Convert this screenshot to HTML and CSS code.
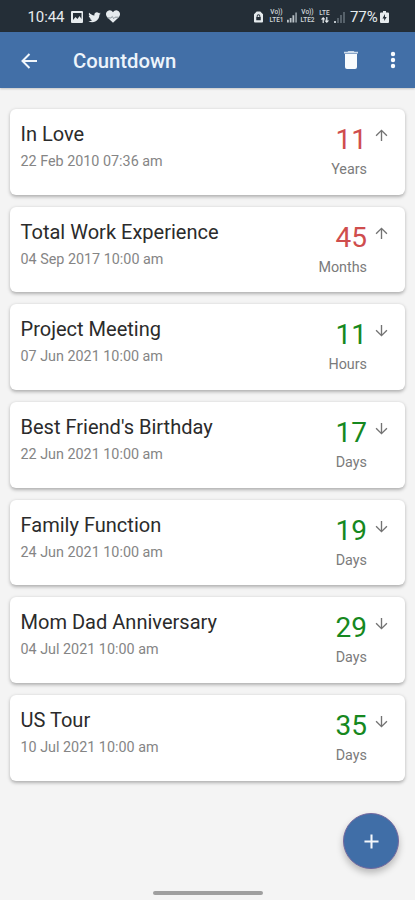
FILE: index.html
```html
<!DOCTYPE html>
<html lang="en">
<head>
<meta charset="utf-8">
<title>Countdown</title>
<link rel="stylesheet" href="styles.css">
</head>
<body>
<svg width="0" height="0" class="defs">
  <symbol id="up" viewBox="0 0 24 24"><path d="M12 22V3M2 12.500l10-10 10 10"/></symbol>
  <symbol id="down" viewBox="0 0 24 24"><path d="M12 2v19M2 11.500l10 10 10-10"/></symbol>
</svg>
<header class="status">
  <span class="time">10:44</span>
  <svg class="pic" viewBox="0 0 12 12"><path fill-rule="evenodd" d="M1 0h10a1 1 0 0 1 1 1v10a1 1 0 0 1-1 1H1a1 1 0 0 1-1-1V1a1 1 0 0 1 1-1zm1 2v7l2.500-3 2 2L8.500 5 10.500 8V2z"/></svg>
  <svg class="bird" viewBox="1 3 22 18"><path d="M22.460 6c-.77.350-1.600.580-2.460.690.880-.530 1.560-1.370 1.880-2.380-.830.500-1.750.850-2.720 1.050C18.370 4.500 17.260 4 16 4c-2.350 0-4.270 1.920-4.270 4.290 0 .340.040.670.110.980C8.280 9.090 5.110 7.380 3 4.790c-.370.630-.580 1.370-.580 2.150 0 1.490.750 2.810 1.910 3.560-.710 0-1.370-.200-1.950-.500v.030c0 2.080 1.480 3.820 3.440 4.210a4.220 4.220 0 0 1-1.930.070 4.280 4.280 0 0 0 4 2.980 8.521 8.521 0 0 1-5.330 1.840c-.340 0-.680-.020-1.020-.060C3.440 20.290 5.700 21 8.120 21 16 21 20.330 14.460 20.330 8.790c0-.190 0-.370-.010-.560.840-.600 1.560-1.360 2.140-2.230z"/></svg>
  <svg class="heart" viewBox="2 3 20 18"><path d="M12 21L4 13.500C1 10 1.500 6 4.500 4 7.500 2.300 10.500 3.500 12 6c1.500-2.500 4.500-3.700 7.500-2 3 2 3.500 6 .5 9.500z"/><path class="pulse" d="M4 14h5l2-2 2 3 2-2h5"/></svg>
  <span class="spacer"></span>
  <svg class="lock" viewBox="0 0 10 12"><path fill-rule="evenodd" d="M3 0h4l3 3v8a1 1 0 0 1-1 1H1a1 1 0 0 1-1-1V3zM2.500 6v3.500h5V6H7V5a2 2 0 0 0-4 0v1zM4 6V5a1 1 0 0 1 2 0v1z"/></svg>
  <span class="net volte"><span>Vo))</span><span>LTE1</span></span>
  <svg class="signal s1" viewBox="0 0 11 12"><path d="M0 9h2v3H0zM3 7h2v5H3zM6 4h2v8H6z"/><path class="mid" d="M9 1h2v11H9z"/></svg>
  <span class="net volte"><span>Vo))</span><span>LTE2</span></span>
  <span class="net lte"><span>LTE</span><svg class="updown" viewBox="0 0 8 5"><path d="M2 5V2H.5L2.500 0l2 2H3v3zM5 0v3H3.500l2 2 2-2H6V0z"/></svg></span>
  <svg class="signal s2" viewBox="0 0 11 12"><path d="M0 10h2v2H0z"/><path class="dim" d="M3 7h2v5H3zM6 4h2v8H6zM9 1h2v11H9z"/></svg>
  <span class="percent">77%</span>
  <svg class="battery" viewBox="0 0 9 12"><path fill-rule="evenodd" d="M3 0h3v1.500h2a1 1 0 0 1 1 1V11a1 1 0 0 1-1 1H1a1 1 0 0 1-1-1V2.500a1 1 0 0 1 1-1h2zM5 3L2.500 7.500h1.700V10L6.700 6H5z"/></svg>
</header>
<nav class="appbar">
  <svg class="back" viewBox="0 0 16 16"><path d="M16 8H1.500M8.500 1l-7 7 7 7"/></svg>
  <h1>Countdown</h1>
  <svg class="trash" viewBox="0 0 14 18"><path class="lid" d="M0 .8h3.500L4.300 0h5.400l.8.800H14v1.700H0z"/><path d="M1 3h12v13a2 2 0 0 1-2 2H3a2 2 0 0 1-2-2z"/></svg>
  <svg class="more" viewBox="0 0 6 18"><circle cx="3" cy="3" r="2.200"/><circle cx="3" cy="9" r="2.200"/><circle cx="3" cy="15" r="2.200"/></svg>
</nav>
<main class="list">
  <article class="card past"><div class="info"><h2>In Love</h2><p>22 Feb 2010 07:36 am</p></div><div class="count"><b>11</b><span>Years</span></div><svg class="arrow"><use href="#up"/></svg></article>
  <article class="card past"><div class="info"><h2>Total Work Experience</h2><p>04 Sep 2017 10:00 am</p></div><div class="count"><b>45</b><span>Months</span></div><svg class="arrow"><use href="#up"/></svg></article>
  <article class="card"><div class="info"><h2>Project Meeting</h2><p>07 Jun 2021 10:00 am</p></div><div class="count"><b>11</b><span>Hours</span></div><svg class="arrow"><use href="#down"/></svg></article>
  <article class="card"><div class="info"><h2>Best Friend's Birthday</h2><p>22 Jun 2021 10:00 am</p></div><div class="count"><b>17</b><span>Days</span></div><svg class="arrow"><use href="#down"/></svg></article>
  <article class="card"><div class="info"><h2>Family Function</h2><p>24 Jun 2021 10:00 am</p></div><div class="count"><b>19</b><span>Days</span></div><svg class="arrow"><use href="#down"/></svg></article>
  <article class="card"><div class="info"><h2>Mom Dad Anniversary</h2><p>04 Jul 2021 10:00 am</p></div><div class="count"><b>29</b><span>Days</span></div><svg class="arrow"><use href="#down"/></svg></article>
  <article class="card"><div class="info"><h2>US Tour</h2><p>10 Jul 2021 10:00 am</p></div><div class="count"><b>35</b><span>Days</span></div><svg class="arrow"><use href="#down"/></svg></article>
</main>
<button class="fab" aria-label="Add"><svg viewBox="0 0 16 16"><path d="M8 .5v15M.5 8h15"/></svg></button>
<div class="handle"></div>
</body>
</html>
```
FILE: styles.css
```css
* { box-sizing: border-box; margin: 0; padding: 0; }
body {
  width: 415px;
  height: 900px;
  overflow: hidden;
  position: relative;
  background: #f4f4f4;
  font-family: Roboto, sans-serif;
}
.defs { position: absolute; }
svg { display: block; flex: none; }

.status {
  height: 32px;
  padding: 1px 26px 0 27.5px;
  display: flex;
  align-items: center;
  background: #242e37;
  color: #e6ebee;
  fill: #e6ebee;
}
.time { width: 43.5px; font-size: 15px; letter-spacing: -0.1px; }
.pic { width: 12px; height: 12px; margin-right: 5px; }
.bird { width: 13px; height: 12px; margin-right: 5px; }
.heart { width: 14px; height: 13px; }
.pulse { fill: none; stroke: #7a848b; stroke-width: 1.2; }
.spacer { flex: 1; }
.lock { width: 9px; height: 12px; margin-right: 6px; }
.net {
  display: flex;
  flex-direction: column;
  align-items: center;
  gap: 0.5px;
  font-size: 6.5px;
  line-height: 7px;
  font-weight: 500;
  white-space: nowrap;
  color: #d2d8dc;
}
.net span { display: block; height: 7px; }
.volte { width: 15px; margin-right: 3px; }
.lte { width: 13px; margin-right: 3px; }
.updown { width: 10px; height: 6px; }
.signal { width: 10px; height: 12px; margin-right: 3px; fill: #bcc4c9; }
.s2 { width: 11px; margin-right: 5px; }
.dim { fill: #56616a; }
.mid { fill: #89939a; }
.percent { width: 30px; font-size: 15px; letter-spacing: -0.1px; }
.battery { width: 9px; height: 12px; }

.appbar {
  height: 56px;
  padding: 2px 19px 0 21px;
  display: flex;
  align-items: center;
  background: #426fa7;
  box-shadow: 0 1px 2px rgba(0, 0, 0, 0.2);
  fill: #f8fbfe;
}
.back { width: 16px; height: 16px; fill: none; stroke: #f1f6fb; stroke-width: 2; }
h1 { flex: 1; margin-left: 36px; font-size: 20.3px; line-height: 24px; font-weight: 500; color: #edf4fb; }
.trash { width: 14px; height: 18px; margin: -3px 32.5px 0 0; }
.lid { fill: #cddcec; }
.more { width: 6px; height: 18px; margin-top: -2px; }

.list { padding: 21px 10px 0; display: flex; flex-direction: column; gap: 12.2px; }
.card {
  height: 85.5px;
  padding: 12px 17px 0 10.5px;
  display: flex;
  border-radius: 6px;
  background: #fff;
  box-shadow: 0 1.5px 3.5px rgba(0, 0, 0, 0.28);
}
.info { flex: 1; }
h2 { font-size: 20.05px; line-height: 26px; font-weight: 400; color: #2b2b2b; }
.info p { margin-top: 6px; font-size: 14.35px; line-height: 18px; color: #858585; }
.count { display: flex; flex-direction: column; align-items: flex-end; }
.count b { margin-top: 2px; font-size: 28px; line-height: 34px; font-weight: 400; color: #168820; }
.past .count b { color: #cf4d4d; }
.count span { margin-top: 4px; font-size: 14.35px; line-height: 18px; color: #7b7b7b; }
.arrow { width: 13px; height: 13px; margin: 8px 0 0 8px; fill: none; stroke: #737373; stroke-width: 2.5; }

.fab {
  position: absolute;
  left: 343px;
  top: 813px;
  width: 56px;
  height: 56px;
  border: 1px solid #73689f;
  border-radius: 50%;
  background: #406ea7;
  box-shadow: 0 4px 7px rgba(0, 0, 0, 0.25);
  display: flex;
  align-items: center;
  justify-content: center;
}
.fab svg { width: 15px; height: 15px; fill: none; stroke: #f4f8fc; stroke-width: 2.2; }
.handle {
  position: absolute;
  left: 153px;
  top: 891px;
  width: 110px;
  height: 4px;
  border-radius: 2px;
  background: #9f9f9f;
}
```
